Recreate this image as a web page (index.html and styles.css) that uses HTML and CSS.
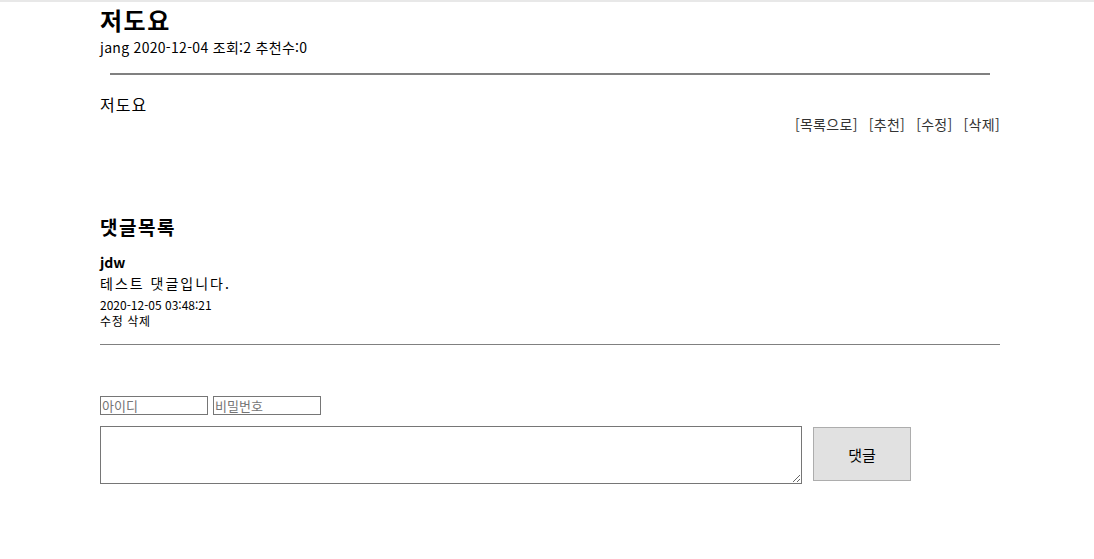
FILE: index.html
```html
<!DOCTYPE html>
<html lang="ko">
<head>
<meta charset="utf-8">
<link rel="stylesheet" href="styles.css">
</head>
<body>
<div class="topline"></div>
<div class="wrap">
  <h1 class="title">저도요</h1>
  <div class="meta">jang 2020-12-04 조회:2 추천수:0</div>
  <div class="rule"></div>
  <div class="content">저도요</div>
  <div class="links">
    <a>[목록으로]</a>
    <a>[추천]</a>
    <a>[수정]</a>
    <a>[삭제]</a>
  </div>
  <h2 class="ctitle">댓글목록</h2>
  <div class="comment">
    <div class="cuser">jdw</div>
    <div class="ctext">테스트 댓글입니다.</div>
    <div class="cdate">2020-12-05 03:48:21</div>
    <div class="cact"><a>수정</a> <a>삭제</a></div>
  </div>
  <div class="crule"></div>
  <form class="cform">
    <div class="creds">
      <input class="field" type="text" placeholder="아이디">
      <input class="field" type="password" placeholder="비밀번호">
    </div>
    <div class="writerow">
      <textarea class="box"></textarea>
      <button class="btn" type="button">댓글</button>
    </div>
  </form>
</div>
</body>
</html>
```
FILE: styles.css
```css
html, body {
  margin: 0;
  padding: 0;
  background: #fff;
}
body {
  font-family: "Noto Sans CJK KR", "Noto Sans", sans-serif;
  color: #000;
}
.topline {
  height: 2px;
  background: #e8e8e8;
}
.wrap {
  width: 900px;
  margin-left: 100px;
  display: flex;
  flex-direction: column;
}
.title {
  margin: 4px 0 0 0;
  font-size: 24px;
  font-weight: 700;
  line-height: 28px;
  letter-spacing: 1.5px;
}
.meta {
  font-size: 14px;
  line-height: 20px;
  margin-top: 3px;
  letter-spacing: 0.3px;
}
.rule {
  height: 2px;
  background: #808080;
  margin: 16px 10px 0 10px;
}
.content {
  font-size: 16px;
  line-height: 22px;
  margin-top: 18px;
  letter-spacing: 1px;
}
.links {
  display: flex;
  justify-content: flex-end;
  gap: 11px;
  font-size: 14px;
  line-height: 20px;
  color: #333;
  margin-top: -1px;
  letter-spacing: 0.3px;
}
.ctitle {
  margin: 80px 0 0 0;
  font-size: 19px;
  font-weight: 700;
  line-height: 26px;
  letter-spacing: 1.5px;
}
.comment {
  margin-top: 12px;
}
.cuser {
  font-size: 14px;
  font-weight: 700;
  line-height: 20px;
}
.ctext {
  font-size: 14px;
  line-height: 20px;
  margin-top: 1px;
  letter-spacing: 2px;
}
.cdate, .cact {
  font-size: 12px;
  line-height: 16px;
}
.cdate {
  margin-top: 4px;
}
.cact {
  letter-spacing: 0.6px;
}
.crule {
  height: 1px;
  background: #808080;
  margin-top: 15px;
}
.cform {
  margin-top: 51px;
}
.creds {
  display: flex;
  gap: 5px;
}
.field {
  box-sizing: border-box;
  width: 108px;
  height: 19px;
  border: 1px solid #767676;
  padding: 0 1px;
  margin: 0;
  font-family: inherit;
  font-size: 13px;
  line-height: 17px;
  border-radius: 0;
}
.field::placeholder {
  color: #757575;
}
.writerow {
  display: flex;
  align-items: flex-start;
  gap: 11px;
  margin-top: 11px;
}
.box {
  box-sizing: border-box;
  width: 702px;
  height: 58px;
  border: 1px solid #767676;
  margin: 0;
  border-radius: 0;
}
.btn {
  box-sizing: border-box;
  width: 98px;
  height: 54px;
  margin-top: 1px;
  background: #e1e1e1;
  border: 1px solid #adadad;
  border-radius: 0;
  font-family: inherit;
  font-size: 15px;
  color: #000;
}
```
